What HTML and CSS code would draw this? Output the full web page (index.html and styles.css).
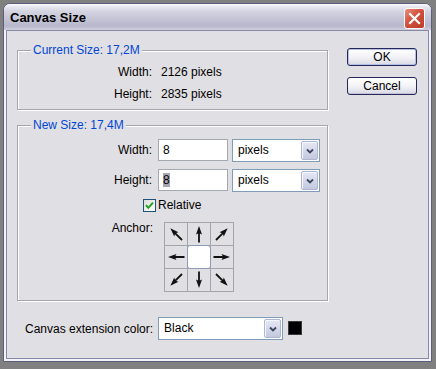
FILE: index.html
```html
<!DOCTYPE html>
<html lang="en">

<head>
    <meta charset="UTF-8">
    <title>Canvas Size</title>
    <link rel="stylesheet" href="styles.css">
</head>

<body>
    <svg class="defs" width="0" height="0">
        <symbol id="arrow" viewBox="0 0 22 22">
            <path d="M11 3 L14 11.5 L11.9 10.4 L11.9 19.5 L10.1 19.5 L10.1 10.4 L8 11.5 Z" />
        </symbol>
    </svg>

    <div class="window">
        <div class="titlebar">
            <span class="title">Canvas Size</span>
            <div class="close">
                <svg width="13" height="13" viewBox="0 0 13 13">
                    <path d="M2 2 L11 11 M11 2 L2 11" stroke="#fff" stroke-width="2.2" stroke-linecap="square" />
                </svg>
            </div>
        </div>

        <div class="client">
            <div class="top">
                <div class="groups">
                    <div class="group group-current">
                        <span class="legend">Current Size: 17,2M</span>
                        <div class="info">
                            <span class="lbl">Width:</span><span>2126 pixels</span>
                            <span class="lbl">Height:</span><span>2835 pixels</span>
                        </div>
                    </div>

                    <div class="group group-new">
                        <span class="legend">New Size: 17,4M</span>

                        <div class="field-row">
                            <span class="lbl">Width:</span>
                            <div class="textbox">8</div>
                            <div class="combo unit">
                                <span>pixels</span>
                                <span class="drop"><svg width="8" height="6" viewBox="0 0 8 6"><path d="M1 1.5 L4 4.5 L7 1.5" fill="none" stroke="#3b4660" stroke-width="1.8" /></svg></span>
                            </div>
                        </div>

                        <div class="field-row">
                            <span class="lbl">Height:</span>
                            <div class="textbox"><span class="sel">8</span></div>
                            <div class="combo unit">
                                <span>pixels</span>
                                <span class="drop"><svg width="8" height="6" viewBox="0 0 8 6"><path d="M1 1.5 L4 4.5 L7 1.5" fill="none" stroke="#3b4660" stroke-width="1.8" /></svg></span>
                            </div>
                        </div>

                        <div class="check-row">
                            <span class="checkbox">
                                <svg width="11" height="11" viewBox="0 0 11 11"><path d="M2 5.2 L4.3 7.8 L9 2.6" fill="none" stroke="#21a121" stroke-width="2" /></svg>
                            </span>
                            <span>Relative</span>
                        </div>

                        <div class="anchor-row">
                            <span class="lbl">Anchor:</span>
                            <div class="anchor">
                                <span class="cell"><svg width="22" height="22"><use href="#arrow" transform="rotate(-45 11 11)" /></svg></span>
                                <span class="cell"><svg width="22" height="22"><use href="#arrow" /></svg></span>
                                <span class="cell"><svg width="22" height="22"><use href="#arrow" transform="rotate(45 11 11)" /></svg></span>
                                <span class="cell"><svg width="22" height="22"><use href="#arrow" transform="rotate(-90 11 11)" /></svg></span>
                                <span class="cell center"></span>
                                <span class="cell"><svg width="22" height="22"><use href="#arrow" transform="rotate(90 11 11)" /></svg></span>
                                <span class="cell"><svg width="22" height="22"><use href="#arrow" transform="rotate(-135 11 11)" /></svg></span>
                                <span class="cell"><svg width="22" height="22"><use href="#arrow" transform="rotate(180 11 11)" /></svg></span>
                                <span class="cell"><svg width="22" height="22"><use href="#arrow" transform="rotate(135 11 11)" /></svg></span>
                            </div>
                        </div>
                    </div>
                </div>

                <div class="buttons">
                    <button class="btn btn-default">OK</button>
                    <button class="btn">Cancel</button>
                </div>
            </div>

            <div class="ext-row">
                <span>Canvas extension color:</span>
                <div class="combo color">
                    <span>Black</span>
                    <span class="drop"><svg width="8" height="6" viewBox="0 0 8 6"><path d="M1 1.5 L4 4.5 L7 1.5" fill="none" stroke="#3b4660" stroke-width="1.8" /></svg></span>
                </div>
                <span class="swatch"></span>
            </div>
        </div>
    </div>
</body>

</html>
```

FILE: styles.css
```css
body {
    margin: 0;
    width: 436px;
    height: 369px;
    overflow: hidden;
    background-color: #808080;
    font-family: "Liberation Sans", Arial, sans-serif;
    font-size: 12px;
    color: #000;
}

.defs {
    position: absolute;
}

.window {
    margin: 3px 0 0 3px;
    width: 429px;
    height: 359px;
    box-sizing: border-box;
    border: 1px solid #5d5d7e;
    border-radius: 7px 7px 0 0;
    background-color: #f2f2f6;
    display: flex;
    flex-direction: column;
}

.titlebar {
    height: 26px;
    display: flex;
    align-items: center;
    padding-left: 6px;
    border-radius: 6px 6px 0 0;
    background: linear-gradient(#fbfbfd 0, #e6e6ef 3px, #d2d2e0 8px, #c4c4d6 15px, #b8b8cc 22px, #cfcfdc 26px);
}

.title {
    flex: 1;
    font-weight: bold;
    font-size: 13px;
    margin-top: 1px;
}

.close {
    width: 19px;
    height: 19px;
    margin: 2px 6px 0 0;
    border: 1px solid #fff;
    border-radius: 3px;
    background: linear-gradient(135deg, #e8907c, #d2513e 45%, #bb3a29);
    display: flex;
    align-items: center;
    justify-content: center;
}

.client {
    flex: 1;
    margin: 0 2px 2px;
    border: 1px solid #8888a8;
    background-color: #e0dfe3;
    padding-left: 10px;
}

.top {
    display: flex;
}

.groups {
    width: 311px;
}

.group {
    position: relative;
    box-sizing: border-box;
    width: 311px;
    border: 1px solid #a6a6ae;
    box-shadow: inset 1px 1px 0 #fff, 1px 1px 0 #fff;
}

.legend {
    position: absolute;
    top: -8px;
    left: 13px;
    padding: 0 2px;
    line-height: 14px;
    color: #0046d5;
    background-color: #e0dfe3;
}

.group-current {
    margin-top: 19px;
    height: 60px;
    padding-top: 10px;
}

.info {
    display: grid;
    grid-template-columns: 134px auto;
    grid-auto-rows: 22px;
    column-gap: 9px;
    align-items: center;
}

.lbl {
    text-align: right;
}

.group-new {
    margin-top: 15px;
    height: 176px;
    padding-top: 13px;
}

.field-row {
    display: flex;
    align-items: flex-start;
    height: 22px;
    margin-bottom: 8px;
}

.field-row .lbl {
    width: 134px;
    margin-right: 6px;
    line-height: 22px;
}

.textbox {
    box-sizing: border-box;
    width: 70px;
    height: 22px;
    border: 1px solid #a4a8b0;
    background-color: #fff;
    padding-left: 4px;
    line-height: 20px;
}

.sel {
    background-color: #a8a8b2;
}

.combo {
    box-sizing: border-box;
    height: 23px;
    border: 1px solid #7f9db9;
    background-color: #fff;
    display: flex;
    align-items: stretch;
    padding: 1px;
}

.combo > span:first-child {
    flex: 1;
    padding-left: 4px;
    line-height: 19px;
}

.drop {
    width: 15px;
    border: 1px solid #aeb6d0;
    border-radius: 2px;
    background: linear-gradient(#e6e8f4, #c4c8de);
    box-shadow: inset 1px 1px 0 #f6f7fc;
    display: flex;
    align-items: center;
    justify-content: center;
}

.unit {
    width: 88px;
    margin-left: 4px;
}

.check-row {
    display: flex;
    align-items: center;
    gap: 2px;
    padding-left: 125px;
    margin-top: -1px;
    height: 14px;
}

.checkbox {
    box-sizing: border-box;
    width: 13px;
    height: 13px;
    border: 1px solid #1c5180;
    background: linear-gradient(135deg, #dcdcd6, #fff);
    display: flex;
    align-items: center;
    justify-content: center;
}

.anchor-row {
    display: flex;
    align-items: flex-start;
    margin-top: 10px;
}

.anchor-row .lbl {
    width: 135px;
    line-height: 12px;
}

.anchor {
    margin-left: 11px;
    display: grid;
    grid-template-columns: repeat(3, 22px);
    grid-auto-rows: 22px;
    gap: 1px;
    padding: 1px;
    background-color: #a4a4aa;
}

.cell {
    background-color: #e0dfe3;
    display: flex;
}

.cell svg {
    fill: #111;
}

.cell.center {
    margin: -1px;
    border: 1px solid #8c9cb4;
    border-radius: 3px;
    background-color: #fff;
}

.buttons {
    margin: 17px 0 0 19px;
    display: flex;
    flex-direction: column;
    gap: 11px;
}

.btn {
    width: 70px;
    height: 18px;
    padding: 0;
    border: 1px solid #26285a;
    border-radius: 3px;
    background: linear-gradient(#ffffff, #f3f3f7 50%, #d9d9e5);
    box-shadow: inset 0 -1px 0 #c4c4d6;
    font-family: inherit;
    font-size: 12px;
    color: #000;
}

.btn-default {
    box-shadow: inset 0 0 0 1px #b3bfe6;
}

.ext-row {
    margin-top: 16px;
    padding-left: 8px;
    display: flex;
    align-items: center;
}

.color {
    width: 125px;
    margin-left: 5px;
}

.swatch {
    box-sizing: border-box;
    width: 14px;
    height: 14px;
    margin-left: 5px;
    margin-top: -2px;
    background-color: #000;
    border: 1px solid #3a3a3a;
}
```
